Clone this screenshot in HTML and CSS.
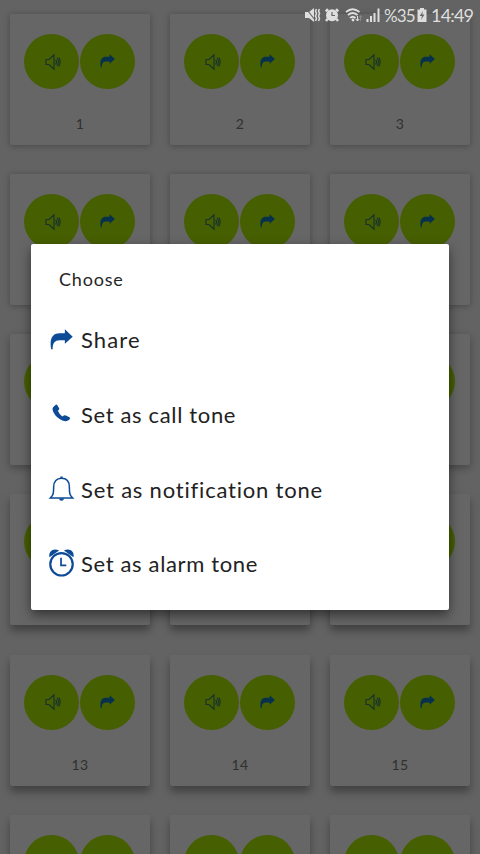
FILE: index.html
```html
<!DOCTYPE html>
<html lang="en">
<head>
<meta charset="utf-8">
<title>Ringtones</title>
<link rel="stylesheet" href="styles.css">
</head>
<body>
<svg class="defs" aria-hidden="true">
  <symbol id="arrow" viewBox="0 0 24 24">
    <path d="M1.200 21C-1 9 3.500 4.500 10 4.500H15.500V.2L23.700 8L15.500 15.500V11.800H10C5 11.800 2.600 15 2.800 21Z"/>
  </symbol>
  <symbol id="speaker" viewBox="0 0 16 16">
    <path d="M1 5.500H4L9 .8V15.200L4 10.500H1Z M10.700 5.500Q12.200 8 10.700 10.500 M12.300 4Q14.500 8 12.300 12 M13.800 3.500Q16.500 8 13.800 12.500" fill="none" stroke="currentColor" stroke-width="1.200"/>
  </symbol>
</svg>
<main class="grid" id="grid"></main>
<header class="status">
  <svg class="s-mute" viewBox="0 0 16 16"><path d="M0 5H4L9 1V15L4 11H0Z" fill="currentColor"/><path d="M1 1.500L10 13" stroke="#666" stroke-width="1.200"/><path d="M11.500 2L10.500 4L11.500 6.500L10.500 9L11.500 11.500L10.500 14M14.500 2L13.500 4L14.500 6.500L13.500 9L14.500 11.500L13.500 14" fill="none" stroke="currentColor" stroke-width="1.500"/></svg>
  <svg class="s-alarm" viewBox="0 0 14 14"><circle cx="7" cy="7.300" r="6" fill="currentColor"/><path d="M.8 3.500L3 1.200M13.200 3.500L11 1.200M2.500 11L1 13M11.500 11L13 13" stroke="currentColor" stroke-width="2.500"/><path d="M7 4V7.500H10" fill="none" stroke="#666" stroke-width="1.200"/></svg>
  <svg class="s-wifi" viewBox="0 0 18 16"><path d="M1 5Q7.500-.5 14.500 5M3 8Q7.500 4 12.500 8M5 11Q7.700 8.500 10.500 11" fill="none" stroke="currentColor" stroke-width="1.700"/><circle cx="8" cy="13" r="1.400" fill="currentColor"/><path d="M12.500 9V14M10.800 12L12.500 14L14.200 12" fill="none" stroke="currentColor"/><path d="M15.500 14V9M14 10.500L15.500 8.500L17 10.500" fill="none" stroke="#888"/></svg>
  <svg class="s-signal" viewBox="0 0 15 16"><path d="M1.500 15V12M5 15V9M8.500 15V6M12.500 15V1.500" stroke="currentColor" stroke-width="2"/></svg>
  <span class="s-pct">%35</span>
  <svg class="s-batt" viewBox="0 0 10 14"><path d="M3 0H7V1.500H9.500V14H.5V1.500H3Z" fill="currentColor"/><path d="M6 3L2.700 8H5L4 12L7.500 6.500H5.200Z" fill="#666"/></svg>
  <span class="s-time">14:49</span>
</header>
<section class="dialog" role="dialog" aria-labelledby="title">
  <h1 class="title" id="title">Choose</h1>
  <ul class="options">
    <li class="option"><svg class="icon" viewBox="0 0 24 24"><use href="#arrow"/></svg><span class="label share">Share</span></li>
    <li class="option"><svg class="icon icon-call" viewBox="0 0 24 24"><path d="M3.200 5.500L5.700 3Q6.700 2.200 7.700 3.500L9.500 6.400Q10 7.500 9 8.300L8.200 9.200Q9.300 12.300 12.800 15L14.500 14.100Q15.500 13.400 16.600 14L20.300 15.800Q21.500 16.500 20.700 17.800C18.800 20.300 16 20.600 13 19.200C7.300 17 3 11.700 2.600 7Z"/></svg><span class="label">Set as call tone</span></li>
    <li class="option"><svg class="icon icon-bell" viewBox="0 0 24 24"><path d="M.5 21.800C3.500 19 3.800 17 3.800 10.500C3.800 4.500 7 1.300 12 1.300S20.200 4.500 20.200 10.500C20.200 17 20.500 19 23.500 21.800Z" fill="none" stroke="currentColor" stroke-width="1.600"/><path d="M10.800 1.500V-.5H13.200V1.500ZM9.300 22.500H14.700Q14.300 24.800 12 24.800T9.300 22.500Z"/></svg><span class="label notification">Set as notification tone</span></li>
    <li class="option"><svg class="icon icon-alarm" viewBox="0 0 24 24"><circle cx="12" cy="12.800" r="11.700" fill="none" stroke="currentColor" stroke-width="2.300"/><path d="M11.500 6V14H17" fill="none" stroke="currentColor" stroke-width="1.800"/><path d="M-.5 5.500C-2-1 4-4.800 9.500-1.500ZM24.500 5.500C26-1 20-4.800 14.500-1.500Z"/></svg><span class="label alarm">Set as alarm tone</span></li>
  </ul>
</section>
<script>
  const grid = document.getElementById('grid');
  const numbers = [1, 2, 3, '', '', '', '', '', '', '', '', '', 13, 14, 15, '', '', ''];
  for (const n of numbers) {
    grid.insertAdjacentHTML('beforeend',
      '<article class="card"><div class="buttons">' +
      '<span class="round"><svg class="speaker"><use href="#speaker"/></svg></span>' +
      '<span class="round"><svg class="forward"><use href="#arrow"/></svg></span>' +
      '</div>' + (n ? '<p class="number">' + n + '</p>' : '') + '</article>');
  }
</script>
</body>
</html>
```
FILE: styles.css
```css
* { box-sizing: border-box; }
body {
  margin: 0;
  width: 480px;
  height: 854px;
  overflow: hidden;
  position: relative;
  background: #636363;
  font-family: Lato, "Open Sans", sans-serif;
}
.defs { position: absolute; width: 0; height: 0; }
.grid {
  display: grid;
  grid-template-columns: repeat(3, 140px);
  grid-auto-rows: 131px;
  gap: 29.150px 20px;
  padding: 14px 10px 0;
  height: 854px;
  overflow: hidden;
}
.card {
  background: #666;
  border-radius: 2px;
  box-shadow: 0 1px 6px rgba(0, 0, 0, .28);
}
.card:nth-child(n+7) { box-shadow: 0 3px 8px rgba(0, 0, 0, .3); }
.card:nth-child(n+10) { box-shadow: 0 6px 9px rgba(0, 0, 0, .34); }
.buttons { display: flex; gap: 1px; padding: 20px 14px 0; }
.round {
  display: flex;
  align-items: center;
  justify-content: center;
  width: 55px;
  height: 55px;
  border-radius: 50%;
  background: #465f00;
}
.speaker { width: 16px; height: 16px; color: #18342c; margin-left: 2px; }
.forward { width: 15px; height: 15px; fill: #06304c; }
.number {
  margin: 26px 0 0;
  text-align: center;
  font-size: 14px;
  line-height: 18px;
  letter-spacing: .3px;
  color: #303030;
}
.status {
  position: absolute;
  top: 0;
  left: 0;
  width: 480px;
  height: 31px;
  padding-left: 305px;
  display: flex;
  align-items: center;
  color: #dedede;
  font-size: 18px;
  line-height: 31px;
  white-space: nowrap;
}
.status svg { flex: none; position: relative; top: -1px; }
.s-mute { width: 16px; height: 16px; }
.s-alarm { width: 14px; height: 14px; margin-left: 4px; }
.s-wifi { width: 18px; height: 16px; margin-left: 6px; }
.s-signal { width: 15px; height: 16px; margin-left: 3px; }
.s-pct { width: 31px; margin-left: 3px; font-size: 17px; letter-spacing: -.9px; }
.s-batt { width: 10px; height: 14px; margin-left: 2px; }
.s-time { margin-left: 4px; letter-spacing: -.8px; }
.dialog {
  position: absolute;
  left: 31px;
  top: 244px;
  width: 418px;
  height: 366px;
  padding: 21px 19px 0;
  background: #fff;
  border-radius: 2px;
  box-shadow: 0 5px 12px rgba(0, 0, 0, .5);
}
.title {
  margin: 0 0 0 9px;
  font-size: 18px;
  line-height: 28px;
  font-weight: 400;
  letter-spacing: .8px;
  color: #252525;
}
.options { margin: 10px 0 0; padding: 0; list-style: none; }
.option { display: flex; align-items: center; height: 74.700px; }
.icon { width: 23px; height: 23px; overflow: visible; fill: #0d4b96; color: #0d4b96; }
.icon-call { margin-top: -3px; }
.icon-bell, .icon-alarm { margin-top: -2px; }
.label { margin-left: 8px; font-size: 22px; line-height: 30px; color: #222; white-space: nowrap; letter-spacing: .65px; }
.share { letter-spacing: 1.100px; }
.notification { letter-spacing: .8px; }
```
